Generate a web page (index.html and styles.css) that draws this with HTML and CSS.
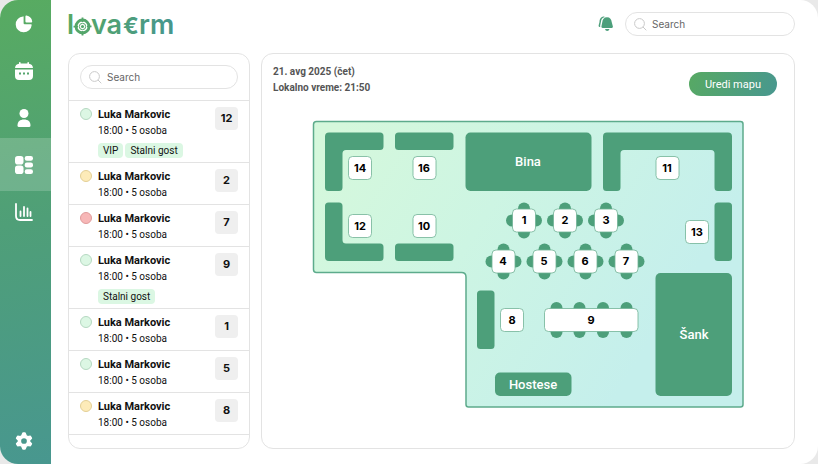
FILE: index.html
```html
<!DOCTYPE html>
<html lang="sr">
<head>
<meta charset="utf-8">
<meta name="viewport" content="width=device-width, initial-scale=1">
<title>lovacrm</title>
<link rel="stylesheet" href="styles.css">
</head>
<body>
<div class="app">
  <nav class="sidebar">
    <a class="nav-item" href="#" aria-label="Pregled">
      <svg width="18" height="18" viewBox="0 0 18 18" fill="currentColor"><path d="M8 1.400Q8.600 1.200 8.600 2V8.200Q8.600 9.300 9.700 9.300H16Q16.800 9.300 16.700 10A8 8 0 1 1 8 1.400Z"/><path d="M10.400 1.400Q10.400.3 11.500.5A7 7 0 0 1 17.200 6.300Q17.400 7.500 16.200 7.500H11.500Q10.400 7.500 10.400 6.400Z"/></svg>
    </a>
    <a class="nav-item" href="#" aria-label="Kalendar">
      <svg width="18" height="18" viewBox="0 0 18 18"><path fill="currentColor" d="M4 0.800Q4 0 4.800 0T5.600.8V1.600H12.400V.8Q12.400 0 13.200 0T14 .8V1.700Q17.600 2.100 18 6H0Q.4 2.100 4 1.700ZM0 7.500H18V14Q18 18 14 18H4Q0 18 0 14Z"/><g fill="#56a56f"><rect x="4" y="10.500" width="2" height="2"/><rect x="8" y="10.500" width="2" height="2"/><rect x="12" y="10.500" width="2" height="2"/></g></svg>
    </a>
    <a class="nav-item" href="#" aria-label="Gosti">
      <svg width="18" height="18" viewBox="0 0 18 18" fill="currentColor"><circle cx="9" cy="4.500" r="4.500"/><path d="M2.500 16.500C2.500 12.500 5 10.500 9 10.500S15.500 12.500 15.500 16.500Q15.500 18 14 18H4Q2.500 18 2.500 16.500Z"/></svg>
    </a>
    <a class="nav-item nav-item-active" href="#" aria-label="Mapa" aria-current="page">
      <svg width="18" height="18" viewBox="0 0 18 18" fill="currentColor"><rect width="8.500" height="8.500" rx="2.800"/><rect y="9.500" width="8.500" height="8.500" rx="2.800"/><rect x="9.700" y="0" width="8.300" height="4.800" rx="2.200"/><rect x="9.700" y="6.600" width="8.300" height="4.800" rx="2.200"/><rect x="9.700" y="13.200" width="8.300" height="4.800" rx="2.200"/></svg>
    </a>
    <a class="nav-item" href="#" aria-label="Statistika">
      <svg width="18" height="18" viewBox="0 0 18 18" fill="none" stroke="currentColor" stroke-width="1.800" stroke-linecap="round"><path d="M1 1V13Q1 17 5 17H17M5.500 8.500V13M9 4V13M12.500 5.500V13M15.500 9V13"/></svg>
    </a>
    <a class="nav-item nav-item-last" href="#" aria-label="Podešavanja">
      <svg width="18" height="18" viewBox="0 0 18 18"><path fill="currentColor" stroke="currentColor" stroke-width="1.500" stroke-linejoin="round" fill-rule="evenodd" d="M8 1H10L11.200 3.900L12.700 4.700L15.300 4.300L16.400 6.200L14.500 8.300V9.700L16.400 11.800L15.300 13.700L12.700 13.300L11.200 14.100L10 17H8L6.800 14.100L5.300 13.300L2.700 13.700L1.600 11.800L3.500 9.700V8.300L1.600 6.200L2.700 4.300L5.300 4.700L6.800 3.900ZM9 5.400A3.600 3.600 0 1 0 9 12.600A3.600 3.600 0 1 0 9 5.400Z"/></svg>
    </a>
  </nav>

  <main class="main">
    <header class="topbar">
      <svg class="logo" width="108" height="28" viewBox="68 10 108 28" role="img" aria-label="lovacrm">
        <defs><linearGradient id="brand" gradientUnits="userSpaceOnUse" x1="68" y1="0" x2="175" y2="0"><stop offset="0" stop-color="#56a864"/><stop offset="1" stop-color="#46968f"/></linearGradient></defs>
        <g fill="url(#brand)">
          <text class="logo-text" x="67" y="34">l</text>
          <text class="logo-text" x="91" y="34">va</text>
          <text class="logo-euro" x="123" y="34">€</text>
          <text class="logo-text" x="139" y="34">rm</text>
          <circle cx="82.500" cy="26.500" r="1.500"/>
        </g>
        <g fill="none" stroke="url(#brand)"><circle cx="82.500" cy="26.500" r="6.500" stroke-width="2.800"/><circle cx="82.500" cy="26.500" r="3.200" stroke-width="1"/><path stroke-width="1.800" d="M82.500 17.500V22M82.500 31V35.500M73.500 26.600H78M87 26.400H91.500"/></g>
      </svg>
      <div class="topbar-tools">
        <button class="bell" type="button" aria-label="Obaveštenja">
          <svg width="16" height="16" viewBox="0 0 16 16" fill="#4c9f7b"><path d="M5.600.5C2.400 1 1.700 3.400 1.500 6L.6 9.400Q.4 10.800 1.500 11H2.400Q2 10.600 2.200 9.600L2.900 6C3.200 3.200 4 1.600 6.900.9Q6.500.4 5.600.5Z"/><path d="M9 1.200C12 1.200 13.500 3.300 13.700 6L14.900 10.500Q15.100 11.900 13.800 12H4.600Q3.200 11.900 3.400 10.500L4.300 6C4.500 3.300 6 1.200 9 1.200ZM7 13H11.500Q11 15 9.200 15T7 13Z"/></svg>
        </button>
        <label class="search search-top">
          <svg width="13" height="13" viewBox="0 0 13 13" fill="none" stroke="#c9c9c9"><circle cx="5.500" cy="5.500" r="4.900"/><path d="M9 9L12.300 12.300"/></svg>
          <input type="search" placeholder="Search" aria-label="Search">
        </label>
      </div>
    </header>

    <div class="content">
      <section class="card guests">
        <div class="guests-search">
          <label class="search">
            <svg width="13" height="13" viewBox="0 0 13 13" fill="none" stroke="#c9c9c9"><circle cx="5.500" cy="5.500" r="4.900"/><path d="M9 9L12.300 12.300"/></svg>
            <input type="search" placeholder="Search" aria-label="Search">
          </label>
        </div>
        <ul class="guest-list">
          <li class="guest"><span class="dot dot-green"></span><div class="guest-info"><strong>Luka Markovic</strong><span>18:00 • 5 osoba</span><div class="tags"><span class="tag">VIP</span><span class="tag">Stalni gost</span></div></div><b class="table-no">12</b></li>
          <li class="guest"><span class="dot dot-yellow"></span><div class="guest-info"><strong>Luka Markovic</strong><span>18:00 • 5 osoba</span></div><b class="table-no">2</b></li>
          <li class="guest"><span class="dot dot-red"></span><div class="guest-info"><strong>Luka Markovic</strong><span>18:00 • 5 osoba</span></div><b class="table-no">7</b></li>
          <li class="guest"><span class="dot dot-green"></span><div class="guest-info"><strong>Luka Markovic</strong><span>18:00 • 5 osoba</span><div class="tags"><span class="tag">Stalni gost</span></div></div><b class="table-no">9</b></li>
          <li class="guest"><span class="dot dot-green"></span><div class="guest-info"><strong>Luka Markovic</strong><span>18:00 • 5 osoba</span></div><b class="table-no">1</b></li>
          <li class="guest"><span class="dot dot-green"></span><div class="guest-info"><strong>Luka Markovic</strong><span>18:00 • 5 osoba</span></div><b class="table-no">5</b></li>
          <li class="guest"><span class="dot dot-yellow"></span><div class="guest-info"><strong>Luka Markovic</strong><span>18:00 • 5 osoba</span></div><b class="table-no">8</b></li>
        </ul>
      </section>

      <section class="card floor">
        <div class="floor-head">
          <div class="floor-time"><div>21. avg 2025 (čet)</div><div>Lokalno vreme: 21:50</div></div>
          <button class="edit" type="button">Uredi mapu</button>
        </div>
        <svg class="map" viewBox="312 120 433 289">
          <defs>
            <linearGradient id="room" gradientUnits="userSpaceOnUse" x1="350" y1="110" x2="670" y2="310"><stop offset="0" stop-color="#d5f8dc"/><stop offset=".45" stop-color="#cdf5e3"/><stop offset="1" stop-color="#c5efec"/></linearGradient>
            <g id="seats"><circle cy="-12" r="6"/><circle cy="12" r="6"/><circle cx="-12" r="6"/><circle cx="12" r="6"/></g>
            <rect id="plate" x="-11.500" y="-11.500" width="23" height="23" rx="4"/>
          </defs>
          <path d="M316.500 121.500H740.500Q743 121.500 743 124V404.500Q743 407 740.500 407H468.500Q466 407 466 404.500V277Q466 272.500 461.500 272.500H316.500Q313.500 272.500 313.500 269.500V124.500Q313.500 121.500 316.500 121.500Z" fill="url(#room)" stroke="#5dab8c" stroke-width="1.500"/>
          <g fill="#4d9f7a">
            <path d="M329 132.500H380Q383.500 132.500 383.500 136V146.500Q383.500 150 380 150H346Q342.500 150 342.500 153.500V187.500Q342.500 191 339 191H328.500Q325 191 325 187.500V136.500Q325 132.500 329 132.500Z"/>
            <path d="M328.500 202.500H339Q342.500 202.500 342.500 206V240Q342.500 243.500 346 243.500H380Q383.500 243.500 383.500 247V257.500Q383.500 261 380 261H329Q325 261 325 257V206Q325 202.500 328.500 202.500Z"/>
            <rect x="395" y="132.500" width="58.500" height="17.500" rx="3.500"/>
            <rect x="395" y="243.500" width="58.500" height="17.500" rx="3.500"/>
            <rect x="465.500" y="132.500" width="126" height="58.500" rx="5"/>
            <path d="M607 132.500H728Q732 132.500 732 136.500V187.500Q732 191 728.500 191H718Q714.500 191 714.500 187.500V153.500Q714.500 150 711 150H624Q620.500 150 620.500 153.500V187.500Q620.500 191 617 191H606.500Q603 191 603 187.500V136.500Q603 132.500 607 132.500Z"/>
            <rect x="714.500" y="202.500" width="17.500" height="58.500" rx="3.500"/>
            <rect x="655.500" y="273" width="76.500" height="123" rx="5"/>
            <rect x="477" y="290.500" width="17.500" height="58.500" rx="3.500"/>
            <rect x="495" y="372.500" width="76.500" height="23.500" rx="5"/>
            <use href="#seats" x="524" y="220.500"/><use href="#seats" x="565" y="220.500"/><use href="#seats" x="606" y="220.500"/>
            <use href="#seats" x="503.500" y="261.500"/><use href="#seats" x="544.500" y="261.500"/><use href="#seats" x="585.500" y="261.500"/><use href="#seats" x="626.500" y="261.500"/>
            <rect x="550.500" y="302" width="12" height="36" rx="6"/><rect x="573.500" y="302" width="12" height="36" rx="6"/><rect x="597" y="302" width="12" height="36" rx="6"/><rect x="620.500" y="302" width="12" height="36" rx="6"/>
          </g>
          <g fill="#fff" stroke="#70b396" stroke-width=".8">
            <use href="#plate" x="360" y="168"/><use href="#plate" x="424.500" y="168"/><use href="#plate" x="360" y="226"/><use href="#plate" x="424.500" y="226"/>
            <use href="#plate" x="667.500" y="168"/><use href="#plate" x="697" y="232"/><use href="#plate" x="512" y="320"/>
            <use href="#plate" x="524" y="220.500"/><use href="#plate" x="565" y="220.500"/><use href="#plate" x="606" y="220.500"/>
            <use href="#plate" x="503.500" y="261.500"/><use href="#plate" x="544.500" y="261.500"/><use href="#plate" x="585.500" y="261.500"/><use href="#plate" x="626.500" y="261.500"/>
            <rect x="544.500" y="308.500" width="93.500" height="23" rx="4"/>
          </g>
          <g class="map-no">
            <text x="360" y="172">14</text><text x="424" y="172">16</text><text x="360" y="230">12</text><text x="424" y="230">10</text>
            <text x="667" y="172">11</text><text x="697" y="236">13</text>
            <text x="524" y="224">1</text><text x="565" y="224">2</text><text x="606" y="224">3</text>
            <text x="503" y="265">4</text><text x="544" y="265">5</text><text x="585" y="265">6</text><text x="626" y="265">7</text>
            <text x="512" y="324">8</text><text x="591" y="324">9</text>
          </g>
          <g class="map-label"><text x="528" y="166">Bina</text><text x="694" y="339">Šank</text><text x="533" y="389">Hostese</text></g>
        </svg>
      </section>
    </div>
  </main>
</div>
</body>
</html>
```
FILE: styles.css
```css
* { box-sizing: border-box; }

body {
  margin: 0;
  background: #e9e9e9;
  font-family: Roboto, "Liberation Sans", sans-serif;
  font-size: 10px;
  color: #111;
}

button, input { font: inherit; }

.app {
  display: flex;
  min-height: 100vh;
  overflow: hidden;
  border-radius: 18px;
  background: #fff;
}

.sidebar {
  display: flex;
  flex-direction: column;
  flex: 0 0 51px;
  background: linear-gradient(170deg, #58ab61, #4f9f78 48%, #48978f);
}

.nav-item {
  display: flex;
  align-items: center;
  justify-content: center;
  height: 47px;
  padding-right: 3px;
  color: #fff;
}

.nav-item-active {
  height: 53px;
  margin: -3px 0;
  background: rgba(255, 255, 255, .18);
}

.nav-item-last { margin-top: auto; }

.main {
  display: flex;
  flex: 1;
  flex-direction: column;
  gap: 17px;
  min-width: 0;
  padding: 12px 23px 15px 17px;
}

.topbar {
  display: flex;
  align-items: center;
  justify-content: space-between;
  height: 24px;
}

.logo { overflow: visible; }

.logo-text {
  font-family: Inter, sans-serif;
  font-size: 27px;
  font-weight: 600;
}

.logo-euro {
  font-family: Inter, sans-serif;
  font-size: 23px;
  font-weight: 700;
}

.topbar-tools {
  display: flex;
  align-items: center;
  gap: 11px;
}

.bell {
  display: flex;
  padding: 0;
  border: 0;
  background: none;
}

.search {
  display: flex;
  align-items: center;
  gap: 5px;
  height: 24px;
  padding: 0 8px;
  border: 1px solid #e3e3e3;
  border-radius: 12px;
  font-size: 10px;
  font-family: Inter, sans-serif;
}

.search-top { width: 170px; }
.search svg { flex: none; }

.search input {
  width: 100%;
  min-width: 0;
  padding: 0;
  border: 0;
  outline: 0;
  background: none;
}

.search input::placeholder { color: #666; opacity: 1; }

.content {
  display: flex;
  flex: 1;
  gap: 11px;
}

.card {
  border: 1px solid #e3e3e3;
  border-radius: 12px;
}

.guests { flex: 0 0 182px; min-width: 0; }

.guests-search {
  padding: 11px;
  border-bottom: 1px solid #e3e3e3;
}

.guest-list {
  margin: 0;
  padding: 0;
  list-style: none;
}

.guest {
  display: flex;
  align-items: flex-start;
  gap: 6px;
  padding: 6px 11px 3px;
  border-bottom: 1px solid #e3e3e3;
}

.dot {
  width: 12px;
  height: 12px;
  margin-top: 1px;
  border: 1px solid;
  border-radius: 50%;
}

.dot-green { background: #dcf7e4; border-color: #b5d8c1; }
.dot-yellow { background: #fdebb9; border-color: #e3cf96; }
.dot-red { background: #f7b7b7; border-color: #e09b9b; }

.guest-info {
  display: flex;
  flex: 1;
  flex-direction: column;
  line-height: 16px;
  white-space: nowrap;
}

.guest-info strong { font-size: 11px; font-weight: 700; }

.tags {
  display: flex;
  gap: 2px;
  margin: 4px 0 1px;
}

.tag {
  padding: 0 5px;
  border-radius: 4px;
  background: #dbf7e3;
  line-height: 15px;
}

.table-no {
  flex: 0 0 23px;
  border-radius: 4px;
  background: #efefef;
  font-family: Inter, sans-serif;
  font-size: 11px;
  line-height: 23px;
  text-align: center;
}

.floor {
  display: flex;
  flex: 1;
  flex-direction: column;
  gap: 24px;
  min-width: 0;
  padding-top: 10px;
}

.floor-head {
  display: flex;
  align-items: flex-end;
  justify-content: space-between;
  padding: 0 17px 0 11px;
}

.floor-time {
  color: #555;
  font-weight: 700;
  line-height: 16px;
}

.edit {
  height: 24px;
  padding: 0 16px;
  border: 0;
  border-radius: 12px;
  background: linear-gradient(110deg, #57a963, #48978f);
  color: #fff;
  font-size: 11px;
}

.map {
  align-self: center;
  width: 82%;
  max-width: 433px;
}

.map-no {
  font-family: Inter, sans-serif;
  font-size: 11px;
  font-weight: 700;
  text-anchor: middle;
}

.map-label {
  fill: #fff;
  font-size: 13px;
  font-weight: 500;
  text-anchor: middle;
}
```
